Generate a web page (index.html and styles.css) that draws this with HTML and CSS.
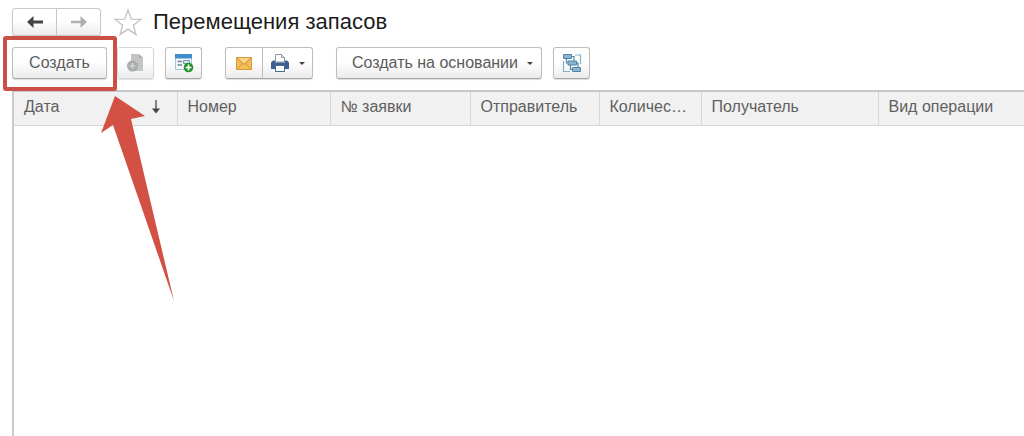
FILE: index.html
```html
<!DOCTYPE html>
<html lang="ru">
<head>
<meta charset="utf-8">
<title>Перемещения запасов</title>
<link rel="stylesheet" href="styles.css">
</head>
<body>
<main class="page">
  <header class="heading">
    <div class="group">
      <button class="btn btn-nav" type="button" aria-label="Назад">
        <svg width="18" height="14" viewBox="0 0 18 14"><path d="M7.500 1 1 7l6.500 6V8.500H17v-3H7.500z" fill="#444"/></svg>
      </button>
      <button class="btn btn-nav" type="button" aria-label="Вперед">
        <svg width="18" height="14" viewBox="0 0 18 14"><path d="M10.500 1 17 7l-6.500 6V8.200H1V5.800h9.500z" fill="#b0b0b0"/></svg>
      </button>
    </div>
    <button class="star" type="button" aria-label="В избранное">
      <svg width="30" height="28" viewBox="0 0 30 28"><path d="M15 2l3.300 9.100 9.700.3-7.700 5.900 2.700 9.300-8-5.500-8 5.500 2.700-9.300L2 11.400l9.700-.3z" fill="#fff" stroke="#c2c2c2" stroke-width="1.300"/></svg>
    </button>
    <h1 class="title">Перемещения запасов</h1>
  </header>

  <div class="toolbar">
    <div class="create">
      <button class="btn btn-create" type="button">Создать</button>
      <div class="frame"></div>
      <svg class="pointer" width="75" height="208" viewBox="0 0 75 208"><path d="M15 2 45 22 31 25 74 207 13 31 1 39z" fill="#d25044"/></svg>
    </div>
    <button class="btn btn-icon btn-copy" type="button" disabled aria-label="Скопировать">
      <svg width="20" height="20" viewBox="0 0 20 20"><path d="M5 1h8l4 4v13H5z" fill="#c3c5c4"/><path d="M13 1v4h4z" fill="#aeb1b0"/><circle cx="6.500" cy="13" r="5.500" fill="#a9adab"/><path d="M6.500 10v6M3.500 13h6" stroke="#d2d4d3" stroke-width="1.600"/></svg>
    </button>
    <button class="btn btn-icon btn-new" type="button" aria-label="Создать группу">
      <svg width="20" height="20" viewBox="0 0 20 20"><path d="M1.500 2h16v14.500h-16z" fill="#f5f9fd" stroke="#a5c4de"/><path d="M1 1h17v4.500H1z" fill="#3c8fcb"/><path d="M3.500 8.500H8M3.500 12H8" stroke="#69879f" stroke-width="1.300"/><path d="M9.500 7.500h6v3h-6z" fill="#d7e5f0" stroke="#7998b0"/><circle cx="14.500" cy="14.500" r="4.800" fill="#219326"/><path d="M14.500 11.500v6M11.500 14.500h6" stroke="#fff" stroke-width="1.700"/></svg>
    </button>
    <div class="group group-output">
      <button class="btn btn-mail" type="button" aria-label="Отправить">
        <svg width="16" height="13" viewBox="0 0 16 13"><path d="M.5.5h15v12H.5z" fill="#f3bd58" stroke="#d99a35"/><path d="M1 12l5.500-5.500M15 12 9.500 6.500" stroke="#d2953a" fill="none"/><path d="M1 1l7 6.500L15 1" fill="#fad488" stroke="#c48228"/></svg>
      </button>
      <button class="btn btn-print" type="button" aria-label="Печать">
        <svg width="18" height="18" viewBox="0 0 18 18"><path d="M4.500 8V.5h6l3 3V8z" fill="#fff" stroke="#8797a8"/><path d="M10.500.5v3h3" fill="#dfe5eb" stroke="#8797a8"/><path d="M2 6.500h2v2h10v-2h2l2 2V15H0V8.500z" fill="#3d5e8e"/><path d="M4.500 11.500h9v6h-9z" fill="#fff" stroke="#48688f"/></svg>
        <svg class="caret" width="6" height="3" viewBox="0 0 6 3"><path d="M0 0h6L3 3z" fill="#444"/></svg>
      </button>
    </div>
    <button class="btn btn-based" type="button">Создать на основании
      <svg class="caret" width="6" height="3" viewBox="0 0 6 3"><path d="M0 0h6L3 3z" fill="#444"/></svg>
    </button>
    <button class="btn btn-icon btn-tree" type="button" aria-label="Структура подчиненности">
      <svg width="20" height="20" viewBox="0 0 20 20"><path d="M13 2h5.500v9M1.500 8v10.500H8" fill="none" stroke="#8ab0c9" stroke-width="1.200"/><path d="M1.500 1.500h8v4h-8zM6 8h8.500v4H6zM10.500 14.500h8v4h-8z" fill="#8bb3cf" stroke="#4d86aa"/><path d="M9.500 3.500h2.500v4.500M4.500 5.500v4.500H6M14.500 10H16v4.500M8.500 12v4.500h2" fill="none" stroke="#4d86aa" stroke-width="1.200"/></svg>
    </button>
  </div>

  <section class="list">
    <table class="grid">
      <colgroup><col class="c-date"><col class="c-number"><col class="c-request"><col class="c-sender"><col class="c-qty"><col class="c-receiver"><col></colgroup>
      <thead>
        <tr>
          <th><div class="sorted">Дата
            <svg width="10" height="14" viewBox="0 0 10 14"><path d="M5 0v12" stroke="#444" stroke-width="1.300"/><path d="M1 8.500H9L5 13.500z" fill="#444"/></svg></div></th>
          <th>Номер</th>
          <th>№ заявки</th>
          <th>Отправитель</th>
          <th>Количество</th>
          <th>Получатель</th>
          <th>Вид операции</th>
        </tr>
      </thead>
    </table>
  </section>
</main>
</body>
</html>
```
FILE: styles.css
```css
* {
  box-sizing: border-box;
}

body {
  margin: 0;
  background: #fff;
  color: #606060;
  font: 16px/20px "Liberation Sans", Arial, sans-serif;
}

.page {
  display: flex;
  flex-direction: column;
  min-height: 100vh;
  padding: 8px 0 0 12px;
}

.heading,
.toolbar,
.group {
  display: flex;
  align-items: center;
}

.heading {
  height: 28px;
}

.btn {
  display: flex;
  align-items: center;
  justify-content: center;
  height: 32px;
  padding: 0;
  border: 1px solid #bdbdbd;
  border-bottom-color: #a6a6a6;
  border-radius: 3px;
  background: linear-gradient(#fff 45%, #ececec);
  box-shadow: 0 1px 1px #dedede;
  color: #5c5c5c;
  font: inherit;
  white-space: nowrap;
}

.btn:disabled {
  border-color: #d6d6d6;
}

.group .btn:first-child {
  border-radius: 3px 0 0 3px;
}

.group .btn:last-child {
  margin-left: -1px;
  border-radius: 0 3px 3px 0;
}

.btn-nav {
  width: 45px;
  height: 28px;
  border-color: #c8c8c8;
}

.star {
  display: flex;
  margin-left: 12px;
  padding: 0;
  border: 0;
  background: none;
}

.title {
  margin: 0 0 0 10px;
  color: #1c1c1c;
  font-size: 22px;
  font-weight: 400;
  line-height: 28px;
}

.toolbar {
  margin-top: 11px;
}

.create {
  position: relative;
}

.btn-create {
  width: 95px;
}

.frame {
  position: absolute;
  inset: -11px -10px -12px -9px;
  border: 4px solid #cb4f46;
  border-radius: 3px;
  pointer-events: none;
}

.pointer {
  position: absolute;
  top: 47px;
  left: 88px;
  pointer-events: none;
}

.btn-icon {
  width: 37px;
}

.btn-copy {
  margin-left: 10px;
}

.btn-new {
  margin-left: 11px;
}

.group-output {
  margin-left: 23px;
}

.btn-mail {
  width: 38px;
}

.btn-print {
  gap: 10px;
  width: 51px;
}

.btn-based {
  justify-content: space-between;
  width: 206px;
  margin-left: 23px;
  padding: 0 8px 0 15px;
}

.btn-tree {
  margin-left: 11px;
}

.list {
  flex: 1;
  margin-top: 11px;
  border-top: 2px solid #c6c6c6;
  border-left: 2px solid #cacaca;
}

.grid {
  width: 100%;
  table-layout: fixed;
  border-collapse: collapse;
}

.grid th {
  height: 33px;
  padding: 0 10px 2px 10px;
  overflow: hidden;
  border-right: 1px solid #d6d6d6;
  border-bottom: 1px solid #d6d6d6;
  background: #f1f1f1;
  font-weight: 400;
  text-align: left;
  text-overflow: ellipsis;
  white-space: nowrap;
}

.grid th:last-child {
  border-right: 0;
}

.sorted {
  display: flex;
  align-items: center;
  justify-content: space-between;
  padding-right: 6px;
}

.c-date {
  width: 163px;
}

.c-number {
  width: 153px;
}

.c-request {
  width: 140px;
}

.c-sender {
  width: 129px;
}

.c-qty {
  width: 102px;
}

.c-receiver {
  width: 177px;
}
```
